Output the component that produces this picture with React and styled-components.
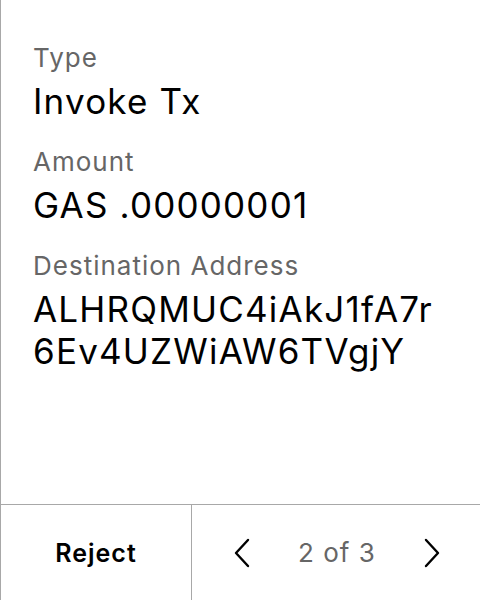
import React from "react";
import styled, { createGlobalStyle } from "styled-components";

const GlobalStyle = createGlobalStyle`
  html, body {
    margin: 0;
    padding: 0;
    background: #fff;
  }
  body {
    font-family: Inter, "Noto Sans", sans-serif;
  }
`;

const Screen = styled.div`
  width: 480px;
  height: 600px;
  box-sizing: border-box;
  border-left: 1px solid #a8a8a8;
  display: flex;
  flex-direction: column;
  background: #fff;
`;

const Details = styled.div`
  flex: 1;
  padding: 40px 42px 0 32px;
  display: flex;
  flex-direction: column;
  gap: 22px;
`;

const Field = styled.div`
  display: flex;
  flex-direction: column;
  gap: 4px;
`;

const Label = styled.div`
  font-size: 26px;
  line-height: 36px;
  letter-spacing: 1px;
  color: #666;
`;

const Value = styled.div`
  font-size: 35px;
  line-height: 42px;
  letter-spacing: 1.2px;
  color: #000;
  word-break: break-all;
`;

const Footer = styled.div`
  height: 96px;
  box-sizing: border-box;
  border-top: 1px solid #a8a8a8;
  display: grid;
  grid-template-columns: 191px 1fr;
`;

const RejectButton = styled.button`
  border: none;
  border-right: 1px solid #a8a8a8;
  background: none;
  font-family: inherit;
  font-size: 25px;
  font-weight: 600;
  letter-spacing: 1px;
  color: #000;
  padding: 0;
  cursor: pointer;
`;

const Pager = styled.div`
  display: flex;
  align-items: center;
  justify-content: space-between;
  padding: 0 36px 0 38px;
`;

const Arrow = styled.button`
  border: none;
  background: none;
  padding: 0;
  width: 24px;
  height: 34px;
  display: flex;
  align-items: center;
  justify-content: center;
  cursor: pointer;
`;

const PageCount = styled.span`
  font-size: 26px;
  letter-spacing: 1px;
  color: #666;
`;

const Chevron = ({ dir }) => (
  <svg width="20" height="32" viewBox="0 0 20 32" fill="none">
    <path
      d={dir === "left" ? "M16 3 L4 16 L16 29" : "M4 3 L16 16 L4 29"}
      stroke="#000"
      strokeWidth="2.4"
      strokeLinecap="round"
      strokeLinejoin="round"
    />
  </svg>
);

const fields = [
  { label: "Type", value: "Invoke Tx" },
  { label: "Amount", value: "GAS .00000001" },
  { label: "Destination Address", value: "ALHRQMUC4iAkJ1fA7r6Ev4UZWiAW6TVgjY" },
];

export default function App() {
  return (
    <>
      <GlobalStyle />
      <Screen>
        <Details>
          {fields.map((f) => (
            <Field key={f.label}>
              <Label>{f.label}</Label>
              <Value>{f.value}</Value>
            </Field>
          ))}
        </Details>
        <Footer>
          <RejectButton>Reject</RejectButton>
          <Pager>
            <Arrow aria-label="previous">
              <Chevron dir="left" />
            </Arrow>
            <PageCount>2 of 3</PageCount>
            <Arrow aria-label="next">
              <Chevron dir="right" />
            </Arrow>
          </Pager>
        </Footer>
      </Screen>
    </>
  );
}
